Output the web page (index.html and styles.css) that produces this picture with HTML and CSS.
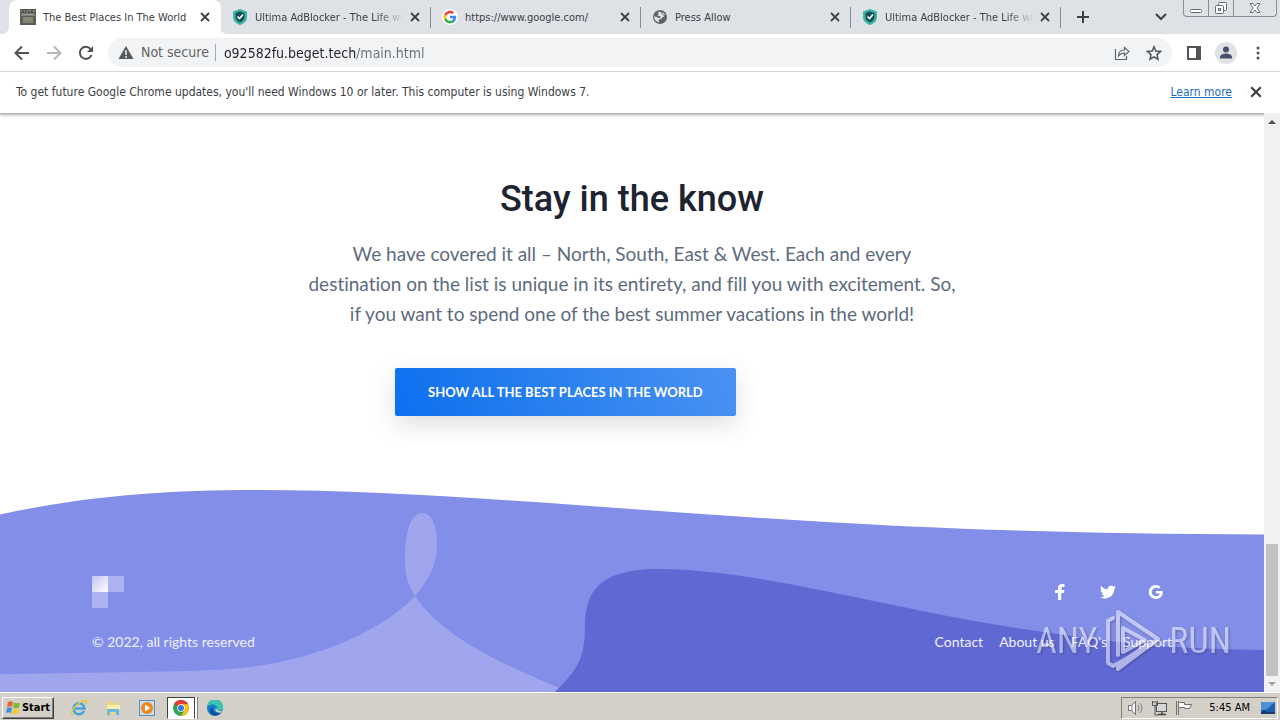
FILE: index.html
```html
<!DOCTYPE html>
<html lang="en">
<head>
    <meta charset="utf-8">
    <title>The Best Places In The World</title>
    <link rel="stylesheet" href="styles.css">
</head>
<body>
    <!-- shared icons -->
    <svg class="defs" width="0" height="0">
        <symbol id="close" viewBox="0 0 10 10"><path d="M1 1l8 8M9 1l-8 8" fill="none" stroke="currentColor" stroke-width="1.8"/></symbol>
        <symbol id="shield" viewBox="0 0 16 16">
            <path d="M8 0l7 2.500v5.500c0 4-3 6.500-7 8c-4-1.500-7-4-7-8v-5.500z" fill="#3cb5a2"/>
            <path d="M8 2.500l4.500 1.500v4c0 2.500-2 4.500-4.500 5.500c-2.500-1-4.500-3-4.500-5.500v-4z" fill="#174d59"/>
            <path d="M5.500 7.500l2 2l3.500-4" fill="none" stroke="#fff" stroke-width="1.600"/>
        </symbol>
        <symbol id="google" viewBox="0 0 24 24">
            <path fill="#4285f4" d="M22.600 12.200c0-.8-.1-1.500-.2-2.200H12v4.300h5.900a5 5 0 0 1-2.200 3.300v2.800h3.600c2.100-1.900 3.300-4.800 3.300-8.200z"/>
            <path fill="#34a853" d="M12 23c3 0 5.500-1 7.300-2.700l-3.600-2.800c-1 .7-2.200 1.100-3.700 1.100-2.900 0-5.300-1.900-6.200-4.500H2.200v2.800A11 11 0 0 0 12 23z"/>
            <path fill="#fbbc05" d="M5.800 14.100a6.600 6.600 0 0 1 0-4.200V7H2.200a11 11 0 0 0 0 9.900z"/>
            <path fill="#ea4335" d="M12 5.400c1.600 0 3.100.6 4.200 1.600l3.200-3.100A11 11 0 0 0 2.200 7l3.600 2.900C6.700 7.300 9.100 5.400 12 5.400z"/>
        </symbol>
    </svg>

    <header class="tab-strip">
        <div class="tab active">
            <svg class="favicon" viewBox="0 0 16 16"><rect width="16" height="16" fill="#5d5c58"/><path d="M1 2h14M2 5h12M1 6h14M3 13h10" stroke="#a7a59b" stroke-width="1"/><path d="M3 1v3M6 0v3M9 2v2M12 0v4" stroke="#333"/><rect x="3" y="8" width="10" height="4" fill="#898a73"/></svg>
            <span class="tab-title">The Best Places In The World</span>
            <button class="tab-close" aria-label="Close tab"><svg><use href="#close"/></svg></button>
        </div>
        <div class="tab">
            <svg class="favicon"><use href="#shield"/></svg>
            <span class="tab-title fade">Ultima AdBlocker - The Life with</span>
            <button class="tab-close" aria-label="Close tab"><svg><use href="#close"/></svg></button>
        </div>
        <div class="tab">
            <svg class="favicon google"><use href="#google"/></svg>
            <span class="tab-title">https://www.google.com/</span>
            <button class="tab-close" aria-label="Close tab"><svg><use href="#close"/></svg></button>
        </div>
        <div class="tab">
            <svg class="favicon" viewBox="0 0 16 16"><circle cx="8" cy="8" r="7" fill="#5f6368"/><path d="M8 2.500c-2 .2-2.500 1-1.500 1.800s-.5 1-1 1.700 1.500.8 2.500 1.200 1 1.300-.5 1.800-2-.8-3.300-1.200-2-.3-2.200.7c.5 2.500 2.500 4.500 5 5 .5-1-.8-1.700 0-2.700s2.500-.4 3-1.800 1.500-1 2.500-1.500M10.500 3c-.5 1.500.5 3 3 3" fill="#dee1e6"/></svg>
            <span class="tab-title">Press Allow</span>
            <button class="tab-close" aria-label="Close tab"><svg><use href="#close"/></svg></button>
        </div>
        <div class="tab">
            <svg class="favicon"><use href="#shield"/></svg>
            <span class="tab-title fade">Ultima AdBlocker - The Life with</span>
            <button class="tab-close" aria-label="Close tab"><svg><use href="#close"/></svg></button>
        </div>
        <button class="new-tab" aria-label="New tab"><svg width="12" height="12" viewBox="0 0 12 12"><path d="M6 0v12M0 6h12" stroke="#3c4043" stroke-width="2"/></svg></button>
        <button class="tab-search" aria-label="Search tabs"><svg width="12" height="8" viewBox="0 0 12 8"><path d="M1 1l5 5l5-5" fill="none" stroke="#3c4043" stroke-width="2"/></svg></button>
        <div class="window-buttons">
            <button aria-label="Minimize"><svg width="14" height="15" viewBox="0 0 14 15"><rect x="1.500" y="8.500" width="11" height="3" rx="1" fill="#fff" stroke="#676a72"/></svg></button>
            <button aria-label="Restore"><svg width="14" height="15" viewBox="0 0 14 15"><rect x="4.500" y="1.500" width="8" height="8" rx="1" fill="#fff" stroke="#676a72"/><rect x="1.500" y="4.500" width="8" height="8" rx="1" fill="#fff" stroke="#676a72"/><rect x="4.500" y="7.500" width="2" height="2" fill="none" stroke="#676a72"/></svg></button>
            <button aria-label="Close"><svg width="14" height="15" viewBox="0 0 14 15"><path d="M2 2.500h3l2 2.500l2-2.500h3l-3 4.500l3 4.500h-3l-2-2.500l-2 2.500h-3l3-4.500z" fill="#fff" stroke="#676a72"/></svg></button>
        </div>
    </header>

    <div class="toolbar">
        <button class="tool" aria-label="Back"><svg width="16" height="16" viewBox="0 0 16 16"><path d="M15 8H2M8 1.500L1.500 8L8 14.500" fill="none" stroke="#505357" stroke-width="2"/></svg></button>
        <button class="tool" aria-label="Forward"><svg width="16" height="16" viewBox="0 0 16 16"><path d="M1 8h13M8 1.500L14.500 8L8 14.500" fill="none" stroke="#b5b7ba" stroke-width="2"/></svg></button>
        <button class="tool" aria-label="Reload"><svg width="16" height="16" viewBox="0 0 16 16"><path d="M13.500 10A6 6 0 1 1 12.500 4" fill="none" stroke="#505357" stroke-width="2"/><path d="M15 1v6H9z" fill="#505357"/></svg></button>
        <div class="omnibox">
            <svg width="16" height="16" viewBox="0 0 16 16"><path d="M8 1l7.500 13H.5z" fill="#55585c"/><path d="M8 5v5M8 11v2" stroke="#f1f3f4" stroke-width="1.500"/></svg>
            <label class="not-secure" for="address">Not secure</label>
            <input id="address" type="text" value="o92582fu.beget.tech/main.html">
            <button aria-label="Share"><svg width="16" height="16" viewBox="0 0 16 16"><path d="M1.500 4v10.500h11V11M4.500 11c0-4 2.500-6 6-6V2.500L15 6.500l-4.500 4V8c-3 0-4.500 1-6 3z" fill="none" stroke="#5f6368" stroke-width="1.200"/></svg></button>
            <button aria-label="Bookmark"><svg width="16" height="16" viewBox="0 0 16 16"><path d="M8 1.800l1.800 4.300l4.700.4l-3.500 3.100l1 4.600L8 11.800l-4 2.400l1-4.600L1.500 6.500l4.700-.4z" fill="none" stroke="#505357" stroke-width="1.500"/></svg></button>
        </div>
        <button class="tool" aria-label="Side panel"><svg width="14" height="14" viewBox="0 0 14 14"><path d="M1 1h12v12H1z" fill="none" stroke="#505357" stroke-width="2"/><path d="M9 0h5v14H9z" fill="#505357"/></svg></button>
        <button class="tool" aria-label="Profile"><svg width="22" height="22" viewBox="0 0 22 22"><circle cx="11" cy="11" r="11" fill="#dee1e6"/><circle cx="11" cy="7.500" r="3" fill="#47506b"/><path d="M5 16.500v-1.500c0-2.500 4-3.500 6-3.500s6 1 6 3.500v1.500z" fill="#47506b"/></svg></button>
        <button class="tool" aria-label="Menu"><svg width="4" height="14" viewBox="0 0 4 14"><g fill="#505357"><circle cx="2" cy="2" r="1.500"/><circle cx="2" cy="7" r="1.500"/><circle cx="2" cy="12" r="1.500"/></g></svg></button>
    </div>

    <div class="infobar">
        <span>To get future Google Chrome updates, you'll need Windows 10 or later. This computer is using Windows 7.</span>
        <a href="#">Learn more</a>
        <button aria-label="Dismiss"><svg width="12" height="12"><use href="#close"/></svg></button>
    </div>

    <div class="viewport">
        <div class="page">
            <main class="newsletter">
                <h2>Stay in the know</h2>
                <p>We have covered it all – North, South, East &amp; West. Each and every destination on the list is unique in its entirety, and fill you with excitement. So, if you want to spend one of the best summer vacations in the world!</p>
                <div class="form">
                    <button class="cta">SHOW ALL THE BEST PLACES IN THE WORLD</button>
                </div>
            </main>
            <footer class="site-footer">
                <svg class="waves" viewBox="0 0 1264 202" preserveAspectRatio="none">
                    <path fill="#838ee9" d="M0 24.500C90 5 170 0 260 0C420 0 620 20 810 31C940 39 1080 44 1264 44.500V202H0z"/>
                    <path fill="#a0a6ee" d="M0 184.500C80 182 170 183 230 179C310 173 380 143 415 106C427 92 437 75 437 55C437 36 432 23 422 23C410 23 405 45 405 70C405 85 408 95 415 106C440 145 500 174 569 202H0z"/>
                    <path fill="#6069d3" d="M555 202C575 182 585 170 585 138C585 100 600 79 660 79C760 79 900 122 1037 141C1130 155 1180 159 1264 160V202z"/>
                </svg>
                <div class="footer-inner">
                    <div class="footer-row">
                        <svg width="32" height="32" viewBox="0 0 32 32">
                            <defs><linearGradient id="mark" x1="0" y1="0" x2="1" y2="1"><stop offset="0" stop-color="#c1c3f6"/><stop offset="1" stop-color="#fff"/></linearGradient></defs>
                            <rect width="16" height="16" fill="url(#mark)"/>
                            <path d="M16 0h16v16H16zM0 16h16v16H0z" fill="#adb3f1"/>
                        </svg>
                        <div class="social">
                            <a href="#" aria-label="Facebook"><svg width="16" height="16" viewBox="0 0 16 16"><path fill="#fff" d="M6 16V9H3V6h3V4c0-2.700 1.600-4 4-4 1 0 2 .1 2.500.2V3H11C9.800 3 9.300 3.500 9.300 4.500V6h3.100L12 9H9.300v7z"/></svg></a>
                            <a href="#" aria-label="Twitter"><svg width="16" height="16" viewBox="0 0 16 16"><path fill="#fff" d="M16 3c-.6.3-1.200.4-1.900.5.7-.4 1.200-1 1.400-1.800-.6.4-1.300.6-2.100.8a3.300 3.300 0 0 0-5.600 3C5.100 5.400 2.700 4.100 1.100 2.100a3.300 3.300 0 0 0 1 4.400c-.5 0-1-.2-1.500-.4 0 1.600 1.100 2.900 2.600 3.200-.5.100-1 .2-1.500.1.400 1.300 1.600 2.300 3.100 2.300A6.600 6.600 0 0 1 0 13c1.500.9 3.200 1.500 5 1.500 6 0 9.500-5.100 9.300-9.800.7-.4 1.200-1 1.700-1.700z"/></svg></a>
                            <a href="#" aria-label="Google"><svg width="16" height="16" viewBox="0 0 16 16"><path fill="#fff" d="M8 7v2.400h3.800c-.2 1-1.200 2.900-3.800 2.900a4.300 4.300 0 0 1 0-8.600c1.300 0 2.200.6 2.700 1l1.900-1.800A7 7 0 1 0 8 15c4 0 6.700-2.800 6.700-6.800L14.600 7z"/></svg></a>
                        </div>
                    </div>
                    <div class="footer-row">
                        <span>© 2022, all rights reserved</span>
                        <nav class="links">
                            <a href="#">Contact</a>
                            <a href="#">About us</a>
                            <a href="#">FAQ's</a>
                            <a href="#">Support</a>
                        </nav>
                    </div>
                </div>
            </footer>
        </div>
        <div class="scrollbar">
            <svg width="16" height="16" viewBox="0 0 16 16"><path d="M4 11l4-4l4 4z" fill="#505050"/></svg>
            <div class="thumb"></div>
            <svg width="16" height="16" viewBox="0 0 16 16"><path d="M4 6l4 4l4-4z" fill="#a3a3a3"/></svg>
        </div>
        <div class="watermark">
            <span>ANY</span>
            <svg width="56" height="64" viewBox="0 0 56 64"><g fill="none" stroke="#fff" stroke-width="4" stroke-linejoin="round" stroke-linecap="round"><path d="M8 9L3 12V54L8 57L36 42"/><path d="M13 46V3L53 30L13 60V56L42 36"/><path d="M18 19L40 31L18 43V19"/></g></svg>
            <span>RUN</span>
        </div>
    </div>

    <div class="taskbar">
        <button class="start"><svg width="15" height="15" viewBox="0 0 15 15"><path d="M2 2c2-1 3-1 5 0L6 7C4 6 3 6 1 7z" fill="#e8622b"/><path d="M8 2.500c2 1 4 1 6 0L13 7.500c-2 1-4 1-6 0z" fill="#7eba3c"/><path d="M1 8c2-1 3-1 5 0l-1 5c-2-1-3-1-5 0z" fill="#3d8ede"/><path d="M7 8.500c2 1 4 1 6 0l-1 5c-2 1-4 1-6 0z" fill="#f6c931"/></svg>Start</button>
        <div class="quick-launch">
            <button aria-label="Internet Explorer"><svg width="18" height="18" viewBox="0 0 18 18"><path d="M14 12A5.500 5.500 0 1 1 14.500 9.500H5" fill="none" stroke="#3da5e0" stroke-width="2.500"/><path d="M2 16C-1 12 11 0 16 2c1 .5.5 2 0 3" fill="none" stroke="#e9c63a" stroke-width="1.500"/></svg></button>
            <button aria-label="Explorer"><svg width="18" height="18" viewBox="0 0 18 18"><path d="M2 3h5l1 1h7v11H2z" fill="#efd77c"/><path d="M3 6h13v5H3z" fill="#f9edb4"/><path d="M3 16v-6h12v6h-3v-3H6v3z" fill="#69b9dd"/></svg></button>
            <button aria-label="Media Player"><svg width="18" height="18" viewBox="0 0 18 18"><rect x="1.500" y="1.500" width="15" height="15" fill="#c8dcec" stroke="#5c8fbd"/><circle cx="9" cy="9" r="6" fill="#f08519"/><path d="M7 5.500L12.500 9L7 12.500z" fill="#fff"/></svg></button>
            <button class="pressed" aria-label="Chrome"><svg width="16" height="16" viewBox="0 0 16 16"><circle cx="8" cy="8" r="8" fill="#33a351"/><path d="M8 8L1.100 4A8 8 0 0 1 14.900 4z" fill="#e33e30"/><path d="M8 4.200h7A8 8 0 0 1 8 16l3.500-6z" fill="#fbc116"/><circle cx="8" cy="8" r="3.800" fill="#fff"/><circle cx="8" cy="8" r="3" fill="#3b78e7"/></svg></button>
            <button aria-label="Edge"><svg width="16" height="16" viewBox="0 0 16 16"><circle cx="8" cy="8" r="8" fill="#147bc9"/><path d="M0 7A8 8 0 0 1 16 7c0 3-2 4-4 4-3 0-2-1-2-3C10 4 3 3 0 7z" fill="#39c3b0"/><path d="M6 8c-1 4 3 6 8 4-3 5-12 4-11-2 .5-2 2-3 3-2z" fill="#10509b"/><path d="M9 8c1 2 1 3 4 3h2l-1 1.500c-4 1-7-2-5-4.500z" fill="#d4d0c8"/></svg></button>
        </div>
        <div class="tray">
            <svg width="18" height="16" viewBox="0 0 18 16"><path d="M1.500 5.500h3l4-4v13l-4-4h-3z" fill="#fff" stroke="#707070"/><path d="M11 5q2 3 0 6M13 3q4 5 0 10M5 5v6" fill="none" stroke="#808080"/></svg>
            <svg width="18" height="16" viewBox="0 0 18 16"><rect x="5.500" y="3.500" width="10" height="8" fill="#d8d8d8" stroke="#555"/><path d="M7 14.500h8M11 12v2" stroke="#444" stroke-width="1.500"/><path d="M1.500 1v4.500h5V1M3 1v2M5 1v2M4 6v9h3" fill="none" stroke="#555"/></svg>
            <svg width="18" height="16" viewBox="0 0 18 16"><path d="M1.500 1v14M3.500 1v14" stroke="#707070"/><path d="M3.500 2.500h6v2h7l-2 4h-5v-1h-6z" fill="#fff" stroke="#707070"/></svg>
            <time>5:45 AM</time>
            <svg width="16" height="14" viewBox="0 0 16 14"><rect x="1" y="1" width="14" height="11" fill="#1f5eb0"/><path d="M1 1h14L6 9H1z" fill="#4c91d8"/><path d="M1 12h14M3 10h3" stroke="#1b3c70" stroke-width="2"/></svg>
        </div>
    </div>
</body>
</html>
```
FILE: styles.css
```css
* {
    box-sizing: border-box;
}
body {
    margin: 0;
    height: 100vh;
    display: flex;
    flex-direction: column;
    overflow: hidden;
    font-family: "DejaVu Sans Condensed", "DejaVu Sans", sans-serif;
    font-size: 12px;
    color: #3c4043;
    background: #fff;
}
button {
    margin: 0;
    padding: 0;
    border: 0;
    background: none;
    font: inherit;
    color: inherit;
    display: flex;
    align-items: center;
    justify-content: center;
}
.defs {
    position: absolute;
}

/* Tabs */
.tab-strip {
    display: flex;
    flex: none;
    height: 34px;
    padding-left: 9px;
    background: #dee1e6;
}
.tab {
    display: flex;
    align-items: center;
    flex: 0 1 210px;
    min-width: 0;
    padding: 0 10px 0 11px;
    border-right: 1px solid transparent;
    font-size: 11px;
}
.tab:not(.active) {
    border-image: linear-gradient(transparent 8px, #888b92 8px, #888b92 27px, transparent 27px) 1;
}
.tab.active {
    position: relative;
    flex-basis: 212px;
    background: #fff;
    border-radius: 8px 8px 0 0;
}
.tab.active::before,
.tab.active::after {
    content: "";
    position: absolute;
    bottom: 0;
    left: -8px;
    width: 8px;
    height: 8px;
    background: radial-gradient(circle at 0 0, transparent 8px, #fff 8px);
}
.tab.active::after {
    left: 100%;
    background: radial-gradient(circle at 100% 0, transparent 8px, #fff 8px);
}
.favicon {
    flex: none;
    width: 16px;
    height: 16px;
    margin-right: 7px;
}
.favicon.google {
    padding: 1px;
    background: #fff;
    border-radius: 8px;
}
.tab-title {
    flex: 1;
    overflow: hidden;
    white-space: nowrap;
}
.tab-title.fade {
    -webkit-mask-image: linear-gradient(to right, #000 82%, transparent);
    mask-image: linear-gradient(to right, #000 82%, transparent);
}
.tab-close {
    flex: none;
    width: 10px;
    margin-left: 6px;
}
.tab-close svg {
    width: 10px;
    height: 10px;
}
.new-tab {
    width: 44px;
}
.tab-search {
    width: 20px;
    margin-left: auto;
}
.window-buttons {
    display: flex;
    height: 17px;
    margin: 0 3px 0 12px;
    border: 1px solid #8b8e96;
    border-top: 0;
    border-radius: 0 0 4px 4px;
}
.window-buttons button {
    width: 25px;
    border-right: 1px solid #8b8e96;
}
.window-buttons button:last-child {
    width: 42px;
    border-right: 0;
}

/* Address row */
.toolbar {
    display: flex;
    align-items: center;
    flex: none;
    height: 38px;
    padding: 0 6px;
    border-bottom: 1px solid #d8dadd;
}
.tool {
    width: 32px;
    height: 32px;
}
.omnibox {
    display: flex;
    align-items: center;
    flex: 1;
    height: 29px;
    margin: 0 6px;
    padding: 0 2px 0 10px;
    border-radius: 15px;
    background: #f1f3f4;
    font-size: 14px;
}
.omnibox button {
    width: 32px;
}
.not-secure {
    margin-left: 7px;
    padding-right: 6px;
    border-right: 1px solid #a5a8ab;
    line-height: 17px;
    color: #5f6368;
}
.omnibox input {
    flex: 1;
    min-width: 0;
    margin: 0;
    padding: 0 0 0 8px;
    border: 0;
    outline: 0;
    font: inherit;
    color: transparent;
    background: linear-gradient(to right, #202124 140px, #6a6e72 140px);
    -webkit-background-clip: text;
    background-clip: text;
}

.infobar {
    display: flex;
    align-items: center;
    flex: none;
    position: relative;
    height: 41px;
    padding: 0 18px 2px 16px;
    font-size: 12px;
    background: #fff;
    box-shadow: 0 1px 1px #b0b0b0, 0 2px 3px rgba(0,0,0,0.3);
}
.infobar a {
    margin-left: auto;
    color: #1a6cc0;
}
.infobar button {
    margin-left: 18px;
}

/* Page */
.viewport {
    display: flex;
    flex: 1;
    min-height: 0;
    position: relative;
}
.page {
    display: flex;
    flex-direction: column;
    flex: 1;
    min-width: 0;
    font-family: Lato, sans-serif;
    font-variant-ligatures: none;
}
.newsletter {
    flex: 1;
    padding-top: 62px;
    text-align: center;
}
.newsletter h2 {
    margin: 0 0 16px;
    font-family: Roboto, sans-serif;
    font-size: 36px;
    line-height: 48px;
    font-weight: 500;
    color: #1d2330;
}
.newsletter p {
    max-width: 654px;
    margin: 0 auto;
    font-size: 19px;
    line-height: 30px;
    color: #5d6b7d;
}
.form {
    max-width: 474px;
    margin: 39px auto 0;
}
.cta {
    height: 48px;
    padding: 0 33px;
    border-radius: 2px;
    font-size: 13px;
    font-weight: 700;
    color: #fff;
    white-space: nowrap;
    background: linear-gradient(65deg, #0c70ee, #4b92f2);
    box-shadow: 0 8px 24px rgba(40,50,65,0.16);
}
.site-footer {
    position: relative;
    padding-top: 86px;
    height: 202px;
    font-size: 14px;
    line-height: 20px;
    color: #eef0ff;
}
.waves {
    position: absolute;
    left: 0;
    top: 0;
    width: 100%;
    height: 100%;
}
.footer-inner {
    position: relative;
    max-width: 1080px;
    margin: 0 auto;
}
.footer-row {
    display: flex;
    align-items: center;
    justify-content: space-between;
    margin-bottom: 24px;
}
.social {
    display: flex;
    gap: 16px;
}
.social a {
    display: flex;
    justify-content: center;
    width: 32px;
}
.links {
    display: flex;
    gap: 16px;
}
.links a {
    color: inherit;
    text-decoration: none;
}
.scrollbar {
    display: flex;
    flex-direction: column;
    width: 16px;
    background: #f1f1f1;
}
.thumb {
    height: 132px;
    margin: auto 2px 0;
    background: #c1c1c1;
}
.watermark {
    position: absolute;
    right: 49px;
    bottom: 19px;
    display: flex;
    align-items: center;
    gap: 8px;
    font-family: "Roboto Condensed", "Liberation Sans Narrow", "Liberation Sans", sans-serif;
    font-size: 36px;
    color: #fff;
    opacity: 0.5;
    filter: drop-shadow(1px 1px 1px rgba(0,0,0,0.5));
}

/* Taskbar */
.taskbar {
    display: flex;
    align-items: center;
    flex: none;
    height: 28px;
    padding: 2px 2px 0;
    border-top: 1px solid #fff;
    background: #d4d0c8;
    color: #000;
}
.start {
    width: 52px;
    height: 22px;
    gap: 1px;
    border: 1px solid;
    border-color: #fff #404040 #404040 #fff;
    box-shadow: inset -1px -1px #808080;
    font-size: 11px;
    font-weight: 700;
}
.quick-launch {
    display: flex;
    align-items: center;
    gap: 6px;
    margin-left: 11px;
}
.quick-launch button {
    width: 28px;
    height: 22px;
}
.quick-launch .pressed {
    background: #fff;
    border: 1px solid;
    border-color: #404040 #404040 #fff #404040;
    box-shadow: 2px 0 #fff, 3px 0 #808080;
}
.tray {
    display: flex;
    align-items: center;
    gap: 6px;
    height: 22px;
    margin-left: auto;
    padding: 0 1px 0 5px;
    border: 1px solid;
    border-color: #808080 #fff #fff #808080;
    font-size: 11px;
}
.tray time {
    margin: 0 4px 0 10px;
}
```
